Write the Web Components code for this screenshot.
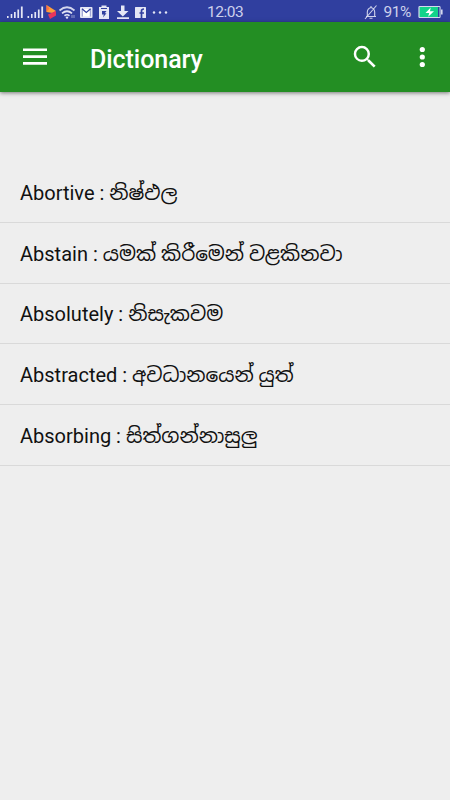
<!DOCTYPE html>
<html lang="en">
<head>
<meta charset="utf-8">
<meta name="viewport" content="width=device-width, initial-scale=1">
<title>Dictionary</title>
<style>
  html, body { margin: 0; height: 100%; }
  body { background: #eee; font-family: Roboto, "Noto Sans Sinhala", "Noto Sans", sans-serif; overflow: hidden; }
</style>
</head>
<body>
<dict-app></dict-app>

<script>
/** <status-bar> — Android system bar: signal and notification icons, clock, battery. */
class StatusBar extends HTMLElement {
  constructor() {
    super();
    this.attachShadow({ mode: 'open' });
  }

  connectedCallback() {
    this.shadowRoot.innerHTML = `
      <style>${this.styles()}</style>
      <svg class="icons" width="172" height="22" viewBox="0 0 172 22" fill="#e4e6f5">
        <path d="M7 15h1.600v2H7zM10.700 13h1.600v4h-1.600zM14 11h1.700v6H14zM17.400 8.500h1.700V17h-1.700zM20.900 5.500h1.800V17h-1.800z"/>
        <path d="M27.500 15h1.600v2h-1.600zM31 13h1.600v4H31zM34.400 11h1.700v6h-1.700zM37.900 8.500h1.700V17h-1.700zM41.300 5.500h1.800V17h-1.800z"/>
        <path d="M46.500 4l9.500 6-3.500 2-6-1z" fill="#ffa03a"/>
        <path d="M46.500 4l3 3.500-3 3.500z" fill="#ff7043"/>
        <path d="M48 13.500l4.500-2L56 10v4.500L50 18z" fill="#e8355c"/>
        <g fill="none" stroke="#e4e6f5" stroke-width="1.700">
          <path d="M59.500 9.500Q67 3 74.500 9.500" opacity=".9"/>
          <path d="M62 12.300Q67 8.200 72 12.300"/>
          <path d="M64.500 14.700Q67 12.800 69.500 14.700"/>
        </g>
        <circle cx="67" cy="16.600" r="1.200"/>
        <path d="M72 17v-3M74 14v3" stroke="#e4e6f5" stroke-width=".8" opacity=".7"/>
        <rect x="80" y="6" width="12.500" height="11" rx="1"/>
        <path d="M82.500 8v7.300h7.700V8" fill="#fff"/>
        <path d="M82 7.800l4.300 3.700 4.300-3.700" fill="none" stroke="#303f9f" stroke-width="1.200"/>
        <path d="M82.300 8v7.500M90.300 8v7.500" stroke="#303f9f" stroke-width=".5"/>
        <path d="M99 6h2.500V4.500h5V6h2.500v12H99z"/>
        <path d="M101 7.500h6" stroke="#303f9f"/>
        <path d="M102 10h4.500l-1.700 2.300h1.700L103 16.500l.8-3H102z" fill="#303f9f"/>
        <path d="M121 4.500h3.500V10h4l-5.700 5.500L117 10h4zM117 16.300h12v1.800h-12z"/>
        <rect x="135" y="6" width="11" height="11" rx=".5"/>
        <path d="M141.500 17v-7q0-2 2.500-2M139.500 12h4.500" fill="none" stroke="#303f9f" stroke-width="1.700"/>
        <circle cx="154" cy="11.500" r="1.200"/><circle cx="160" cy="11.500" r="1.200"/><circle cx="166" cy="11.500" r="1.200"/>
      </svg>
      <span class="clock">12:03</span>
      <span class="right">
        <svg width="14" height="16" viewBox="0 0 14 16" fill="none" stroke="#cfd3ec" stroke-width="1.100">
          <path d="M2 12.500h10M3.300 12.500V8Q3.500 4.500 7 3.500q3.500 1 3.700 4.500v4.500M7 3.500V2M5.500 14.300h3M12.500 1.500L1 15"/>
        </svg>
        <span class="level">91%</span>
        <svg width="26" height="14" viewBox="0 0 26 14">
          <rect x="1" y="1.500" width="21" height="11" rx=".8" fill="#12d38a" stroke="#d5d9ef" stroke-width="1.200"/>
          <path d="M20 2.100h1.400v9.800H20z" fill="#303f9f"/>
          <path d="M23 4.500h1.600v5H23z" fill="#d5d9ef"/>
          <path d="M12.700 2.500L7.500 8h3.700l-1 3.800L16 6.300h-4z" fill="#fff"/>
        </svg>
      </span>
    `;
  }

  styles() {
    return `
      :host {
        display: grid; grid-template-columns: 207px 1fr auto;
        align-items: center; height: 22px; padding-right: 6px; box-sizing: border-box;
        background: #303f9f; color: #cdd1ec; font-size: 15.500px; line-height: 22px;
      }
      svg { display: block; }
      .clock { padding-top: 1px; letter-spacing: -0.5px; }
      .right { display: flex; align-items: center; padding-top: 1px; }
      .level { margin: 0 7px 0 5px; letter-spacing: -0.4px; }
    `;
  }
}

/** <app-toolbar> — Green action bar with menu, slotted title, search and overflow. */
class AppToolbar extends HTMLElement {
  constructor() {
    super();
    this.attachShadow({ mode: 'open' });
  }

  connectedCallback() {
    this.shadowRoot.innerHTML = `
      <style>${this.styles()}</style>
      <svg class="menu" width="24" height="18" viewBox="0 0 24 18" fill="#fff">
        <path d="M0 .500h24v2.600H0zM0 7.300h24v2.600H0zM0 14.100h24v2.600H0z"/>
      </svg>
      <div class="title"><slot></slot></div>
      <svg class="search" width="30" height="30" viewBox="0 0 24 24" fill="#fff">
        <path d="M15.500 14h-.79l-.28-.27A6.471 6.471 0 0 0 16 9.500 6.500 6.500 0 1 0 9.500 16c1.610 0 3.090-.59 4.230-1.570l.27.28v.79l5 4.990L20.490 19l-4.990-5zm-6 0C7.010 14 5 11.990 5 9.500S7.010 5 9.500 5 14 7.010 14 9.500 11.990 14 9.500 14z"/>
      </svg>
      <svg width="6" height="22" viewBox="0 0 6 22" fill="#fff">
        <circle cx="3.300" cy="3.500" r="2.600"/><circle cx="3.300" cy="11" r="2.600"/><circle cx="3.300" cy="18.500" r="2.600"/>
      </svg>
    `;
  }

  styles() {
    return `
      :host {
        display: flex; align-items: center; height: 70px; box-sizing: border-box;
        padding: 0 25px 0 23px; background: #238e23; color: #fff;
        box-shadow: 0 1px 4px rgba(0, 0, 0, .5);
      }
      svg { flex-shrink: 0; }
      .title { flex: 1; margin-left: 43px; padding-top: 5px; font-size: 25px; font-weight: 500; line-height: 30px; letter-spacing: -0.05px; }
      .search { margin-right: 39px; }
    `;
  }
}

/** <word-row> — One entry: term and its translation. */
class WordRow extends HTMLElement {
  constructor() {
    super();
    this.attachShadow({ mode: 'open' });
    this.shadowRoot.innerHTML = `
      <style>
        :host {
          display: flex; align-items: center;
          height: 60.750px; box-sizing: border-box; padding: 2px 20px 0;
          border-bottom: 1px solid #d9d9d9;
          color: #111; font-size: 20px; line-height: 28px; white-space: nowrap;
        }
      </style>
      <span><slot></slot></span>
    `;
  }
}

/** <dict-app> — Screen with the bars and the word list. */
class DictApp extends HTMLElement {
  constructor() {
    super();
    this.attachShadow({ mode: 'open' });
    this._words = [
      ['Abortive', 'නිෂ්ඵල'],
      ['Abstain', 'යමක් කිරීමෙන් වළකිනවා'],
      ['Absolutely', 'නිසැකවම'],
      ['Abstracted', 'අවධානයෙන් යුත්'],
      ['Absorbing', 'සිත්ගන්නාසුලු'],
    ];
  }

  connectedCallback() {
    this.shadowRoot.innerHTML = `
      <style>
        :host { display: flex; flex-direction: column; height: 100vh; background: #eee; }
        .list { padding-top: 70px; }
      </style>
      <status-bar></status-bar>
      <app-toolbar>Dictionary</app-toolbar>
      <div class="list">
        ${this._words.map(([term, text]) => `<word-row>${term} : ${text}</word-row>`).join('')}
      </div>
    `;
  }
}

customElements.define('status-bar', StatusBar);
customElements.define('app-toolbar', AppToolbar);
customElements.define('word-row', WordRow);
customElements.define('dict-app', DictApp);
</script>
</body>
</html>
